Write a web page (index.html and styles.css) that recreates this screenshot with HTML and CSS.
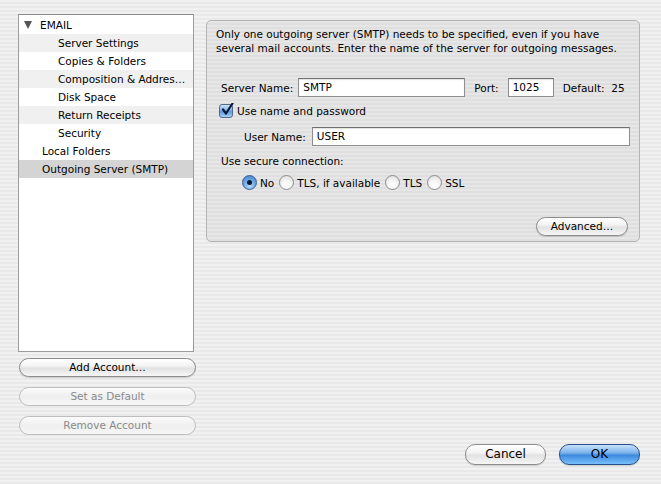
FILE: index.html
```html
<!DOCTYPE html>
<html>
<head>
<meta charset="utf-8">
<link rel="stylesheet" href="styles.css">
</head>
<body>
<div class="window">
  <div class="top">
    <div class="sidebar">
      <div class="list">
        <div class="row group"><span class="tri"></span>EMAIL</div>
        <div class="row child alt">Server Settings</div>
        <div class="row child">Copies &amp; Folders</div>
        <div class="row child alt">Composition &amp; Addres…</div>
        <div class="row child">Disk Space</div>
        <div class="row child alt">Return Receipts</div>
        <div class="row child">Security</div>
        <div class="row top-level">Local Folders</div>
        <div class="row top-level selected">Outgoing Server (SMTP)</div>
      </div>
      <div class="side-buttons">
        <button class="aqua wide">Add Account…</button>
        <button class="aqua wide disabled">Set as Default</button>
        <button class="aqua wide disabled">Remove Account</button>
      </div>
    </div>
    <div class="panel">
      <p class="intro">Only one outgoing server (SMTP) needs to be specified, even if you have<br>several mail accounts. Enter the name of the server for outgoing messages.</p>
      <div class="line server-line">
        <span class="label">Server Name:</span>
        <span class="field server">SMTP</span>
        <span class="label port-label">Port:</span>
        <span class="field port">1025</span>
        <span class="label default">Default:&nbsp;&nbsp;25</span>
      </div>
      <div class="line check-line">
        <span class="checkbox"><svg width="14" height="14" viewBox="0 0 14 14"><path d="M3 6.5 L6 10.5 L12.5 0.5" fill="none" stroke="#0a1a3a" stroke-width="2.2" stroke-linecap="round" stroke-linejoin="round"/></svg></span>
        <span class="label">Use name and password</span>
      </div>
      <div class="line user-line">
        <span class="label">User Name:</span>
        <span class="field user">USER</span>
      </div>
      <div class="secure-label">Use secure connection:</div>
      <div class="line radios">
        <span class="radio on"></span><span class="rlabel">No</span>
        <span class="radio"></span><span class="rlabel">TLS, if available</span>
        <span class="radio"></span><span class="rlabel">TLS</span>
        <span class="radio"></span><span class="rlabel">SSL</span>
      </div>
      <div class="panel-foot">
        <button class="aqua adv">Advanced…</button>
      </div>
    </div>
  </div>
  <div class="footer">
    <button class="aqua dlg">Cancel</button>
    <button class="aqua dlg default-btn">OK</button>
  </div>
</div>
</body>
</html>
```

FILE: styles.css
```css
* { box-sizing: border-box; }
html, body { margin: 0; padding: 0; }
body {
  width: 661px;
  height: 484px;
  overflow: hidden;
  font-family: "DejaVu Sans", "Liberation Sans", sans-serif;
  font-size: 10.5px;
  color: #000;
  background: repeating-linear-gradient(to bottom, #f1f1f1 0, #f1f1f1 2px, #e9e9e9 2px, #e9e9e9 4px);
}
.window { display: flex; flex-direction: column; height: 484px; }
.top { display: flex; padding: 14px 0 0 18px; }
.sidebar { width: 178px; display: flex; flex-direction: column; }
.list {
  width: 176px;
  height: 338px;
  background: #fff;
  border: 1px solid #9c9c9c;
  border-top-color: #8a8a8a;
  padding-top: 1px;
}
.row { height: 18px; line-height: 18px; white-space: nowrap; overflow: hidden; }
.row.alt { background: #f0f0f0; }
.row.group { padding-left: 5px; display: flex; align-items: center; }
.tri {
  width: 0; height: 0;
  border-left: 4.5px solid transparent;
  border-right: 4.5px solid transparent;
  border-top: 8px solid #555;
  margin-right: 8px;
}
.row.child { padding-left: 39px; }
.row.top-level { padding-left: 23px; }
.row.selected { background: #d4d4d4; }
.side-buttons { display: flex; flex-direction: column; gap: 10px; margin-top: 6px; }
button { font-family: inherit; font-size: inherit; }
.aqua {
  height: 19px;
  border-radius: 10px;
  border: 1px solid #8c8c8c;
  background: linear-gradient(to bottom, #ffffff 0%, #f3f3f3 40%, #e2e2e2 55%, #f6f6f6 100%);
  box-shadow: 0 1px 1px rgba(0,0,0,0.15);
  color: #000;
  padding: 0;
  line-height: 17px;
}
.aqua.wide { width: 177px; margin-left: 1px; }
.aqua.disabled { color: #8a8a8a; border-color: #bdbdbd; background: linear-gradient(to bottom, #fbfbfb, #efefef 50%, #f6f6f6); box-shadow: none; }
.panel {
  margin-left: 10px;
  margin-top: 6px;
  width: 434px;
  height: 222px;
  border: 1px solid #b4b4b4;
  border-radius: 5px;
  background: repeating-linear-gradient(to bottom, #e6e6e6 0, #e6e6e6 2px, #dfdfdf 2px, #dfdfdf 4px);
  padding: 6px 0 0 9px;
  display: flex;
  flex-direction: column;
}
.intro { margin: 0; line-height: 14px; white-space: nowrap; }
.line { display: flex; align-items: center; }
.field {
  background: #fff;
  border: 1px solid #8e8e8e;
  border-top-color: #707070;
  height: 19px;
  line-height: 17px;
  padding-left: 4px;
  box-shadow: inset 0 1px 1px rgba(0,0,0,0.12);
}
.server-line { margin-top: 23px; padding-left: 5px; }
.server { width: 167px; margin-left: 5px; }
.port-label { margin-left: 9px; }
.port { width: 46px; margin-left: 9px; }
.default { margin-left: 9px; }
.check-line { margin-top: 7px; padding-left: 3px; }
.checkbox {
  width: 14px; height: 14px;
  border: 1px solid #52698c;
  border-radius: 3px;
  background: linear-gradient(to bottom, #cfe3f7 0%, #80b1e6 45%, #5d98dc 55%, #a5d0f7 100%);
  margin-right: 4px;
  position: relative;
}
.checkbox svg { position: absolute; left: 0; top: -2px; }
.user-line { margin-top: 9px; padding-left: 28px; }
.user { width: 318px; margin-left: 6px; }
.secure-label { margin-top: 8px; padding-left: 5px; line-height: 14px; }
.radios { margin-top: 7px; padding-left: 26px; }
.radio {
  width: 15px; height: 15px;
  border-radius: 50%;
  border: 1px solid #8d8d8d;
  background: radial-gradient(circle at 50% 70%, #ffffff 0%, #f4f4f4 45%, #d8d8d8 100%);
  margin-right: 3px;
  display: flex; align-items: center; justify-content: center;
}
.radio.on {
  border-color: #3a5e93;
  background: radial-gradient(circle at 50% 75%, #b9dcfa 0%, #6aa6e4 50%, #3f7bcb 100%);
}
.radio.on::after { content: ""; width: 5px; height: 5px; border-radius: 50%; background: #0c1a33; }
.rlabel { margin-right: 5px; }
.panel-foot { margin-top: auto; margin-bottom: 5px; display: flex; justify-content: flex-end; padding-right: 11px; }
.adv { width: 92px; }
.footer { margin-top: auto; margin-bottom: 19px; display: flex; justify-content: flex-end; gap: 13px; padding-right: 21px; }
.dlg { width: 81px; height: 21px; font-size: 12px; line-height: 19px; }
.default-btn {
  border-color: #2a4f8c;
  background: linear-gradient(to bottom, #c9e2fa 0%, #7db4ec 40%, #3f8ae0 55%, #78c0fb 100%);
}
```
